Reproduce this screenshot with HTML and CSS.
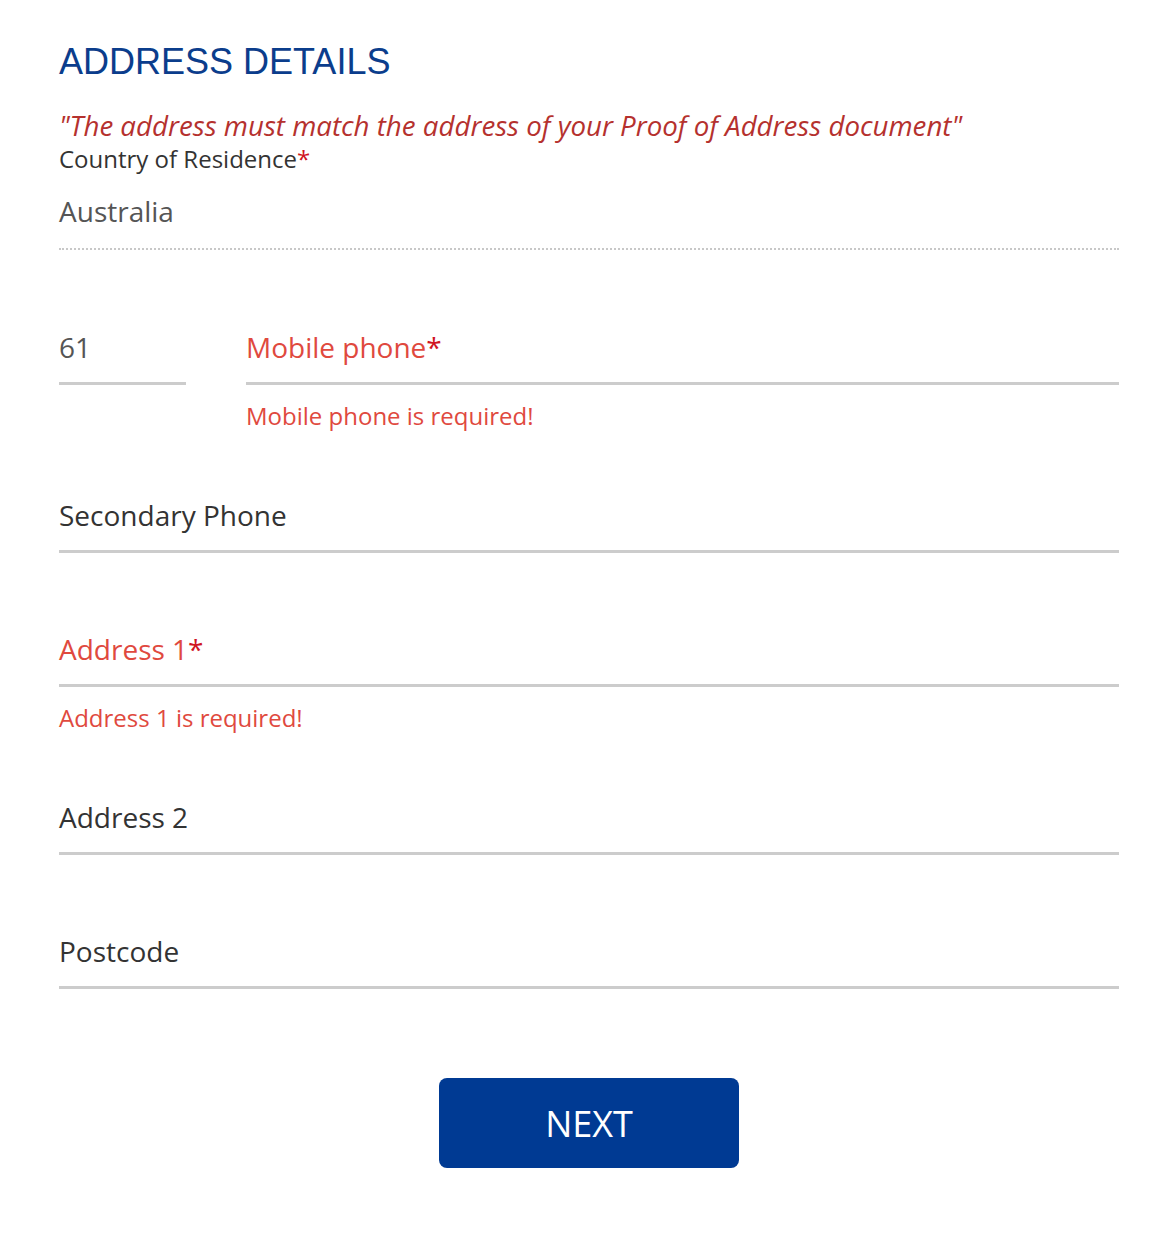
FILE: index.html
```html
<!DOCTYPE html>
<html lang="en">
<head>
<meta charset="utf-8">
<title>Address Details</title>
<link rel="stylesheet" href="styles.css">
</head>
<body>
<main class="page">
  <h1 class="title">ADDRESS DETAILS</h1>
  <p class="note">"The address must match the address of your Proof of Address document"</p>

  <div class="country">
    <div class="country-label">Country of Residence<span class="star">*</span></div>
    <div class="country-value">Australia</div>
  </div>

  <div class="field">
    <div class="phone-row">
      <div class="code">
        <div class="input value">61</div>
      </div>
      <div class="mobile">
        <div class="input invalid">Mobile phone<span class="star">*</span></div>
        <div class="error">Mobile phone is required!</div>
      </div>
    </div>
  </div>

  <div class="field">
    <div class="input">Secondary Phone</div>
  </div>

  <div class="field">
    <div class="input invalid">Address 1<span class="star">*</span></div>
    <div class="error">Address 1 is required!</div>
  </div>

  <div class="field">
    <div class="input">Address 2</div>
  </div>

  <div class="field">
    <div class="input">Postcode</div>
  </div>

  <div class="actions">
    <button class="next" type="button">NEXT</button>
  </div>
</main>
</body>
</html>
```

FILE: styles.css
```css
html, body {
  margin: 0;
  padding: 0;
  background: #ffffff;
}

.page {
  width: 1060px;
  margin-left: 59px;
  padding-top: 41px;
  font-family: "Open Sans", "Noto Sans", sans-serif;
  color: #333333;
}

.title {
  margin: 0;
  font-family: "Liberation Sans", Arial, sans-serif;
  font-weight: 400;
  font-size: 36px;
  line-height: 42px;
  color: #0b3d8c;
}

.note {
  margin: 24px 0 0 0;
  font-style: italic;
  font-size: 27.7px;
  line-height: 36px;
  color: #b5312e;
}

.star {
  color: #d0141f;
}

.country-label {
  font-size: 24px;
  line-height: 32px;
  color: #333333;
}

.country-value {
  height: 73px;
  line-height: 73px;
  font-size: 28px;
  color: #555555;
  border-bottom: 2px dotted #c8c8c8;
}

.field {
  padding-bottom: 65px;
}

.country {
  padding-bottom: 66px;
}

.phone-row {
  display: flex;
  gap: 60px;
}

.code {
  width: 127px;
  flex: none;
}

.mobile {
  flex: 1;
}

.input {
  height: 66px;
  line-height: 63px;
  font-size: 28px;
  color: #333333;
  border-bottom: 3px solid #cccccc;
}

.input.value {
  color: #555555;
}

.input.invalid {
  color: #e0493e;
}

.error {
  margin-top: 14px;
  margin-bottom: -14px;
  line-height: 34px;
  font-size: 24px;
  color: #e0493e;
}

.actions {
  display: flex;
  justify-content: center;
  padding-top: 24px;
}

.next {
  width: 300px;
  height: 90px;
  border: none;
  border-radius: 8px;
  background: #003a93;
  color: #ffffff;
  font-family: "Open Sans", "Noto Sans", sans-serif;
  font-size: 36px;
  font-weight: 400;
  cursor: pointer;
}
```
